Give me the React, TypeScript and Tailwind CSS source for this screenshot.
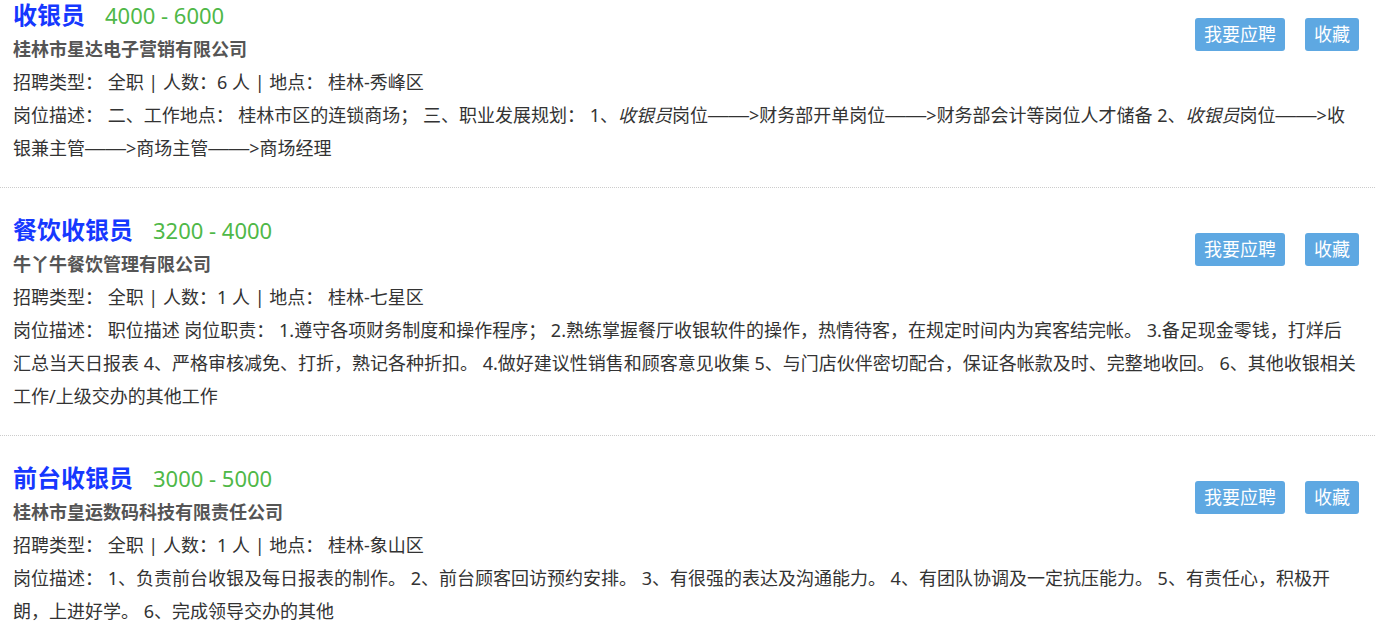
import React from 'react';

type Job = {
  title: string;
  salary: string;
  company: string;
  count: number;
  location: string;
  desc: React.ReactNode;
};

// the long dashes in the reference are a bit wider than an em
const Arrow = () => (
  <>
    <span className="font-['Liberation_Sans'] text-[20.5px] leading-none">——</span>&gt;
  </>
);

const jobs: Job[] = [
  {
    title: '收银员',
    salary: '4000 - 6000',
    company: '桂林市星达电子营销有限公司',
    count: 6,
    location: '桂林-秀峰区',
    desc: (
      <>
        二、工作地点： 桂林市区的连锁商场； 三、职业发展规划： 1、<em>收银员</em>岗位<Arrow />财务部开单岗位<Arrow />财务部会计等岗位人才储备 2、<em>收银员</em>岗位<Arrow />收银兼主管<Arrow />商场主管<Arrow />商场经理
      </>
    ),
  },
  {
    title: '餐饮收银员',
    salary: '3200 - 4000',
    company: '牛丫牛餐饮管理有限公司',
    count: 1,
    location: '桂林-七星区',
    desc: '职位描述 岗位职责： 1.遵守各项财务制度和操作程序； 2.熟练掌握餐厅收银软件的操作，热情待客，在规定时间内为宾客结完帐。 3.备足现金零钱，打烊后汇总当天日报表 4、严格审核减免、打折，熟记各种折扣。 4.做好建议性销售和顾客意见收集 5、与门店伙伴密切配合，保证各帐款及时、完整地收回。 6、其他收银相关工作/上级交办的其他工作',
  },
  {
    title: '前台收银员',
    salary: '3000 - 5000',
    company: '桂林市皇运数码科技有限责任公司',
    count: 1,
    location: '桂林-象山区',
    desc: '1、负责前台收银及每日报表的制作。 2、前台顾客回访预约安排。 3、有很强的表达及沟通能力。 4、有团队协调及一定抗压能力。 5、有责任心，积极开朗，上进好学。 6、完成领导交办的其他',
  },
];

function JobItem({ job }: { job: Job }) {
  return (
    <div className="border-b border-dotted border-[#cccccc] pt-[24px] pb-[22px] pl-[13px] pr-[16px] flow-root">
      {/* Actions */}
      <div className="float-right mt-[21px] flex gap-[20px]">
        <button className="h-[33px] px-[9px] rounded-[3px] bg-[#5ea8e2] text-white text-[18px] leading-[33px]">
          我要应聘
        </button>
        <button className="h-[33px] px-[9px] rounded-[3px] bg-[#5ea8e2] text-white text-[18px] leading-[33px]">
          收藏
        </button>
      </div>

      <div className="flex items-center h-[36px]">
        <span className="text-[24px] font-bold text-[#1638ff]">{job.title}</span>
        <span className="ml-[20px] text-[22px] text-[#4fb848]">{job.salary}</span>
      </div>
      <div className="h-[33px] leading-[33px] text-[18px] font-bold text-[#555555]">{job.company}</div>
      <div className="leading-[33px] text-[18px] text-[#333333]">
        招聘类型： 全职 | 人数：{job.count} 人 | 地点： {job.location}
      </div>
      <div className="leading-[33px] text-[18px] text-[#333333]">岗位描述： {job.desc}</div>
    </div>
  );
}

export default function App() {
  return (
    <div
      className="bg-white w-[1375px] h-[635px] overflow-hidden"
      style={{ fontFamily: '"Noto Sans", "Noto Sans CJK SC", sans-serif' }}
    >
      <div className="-mt-[27px]">
        {jobs.map((job) => (
          <JobItem key={job.title} job={job} />
        ))}
      </div>
    </div>
  );
}
